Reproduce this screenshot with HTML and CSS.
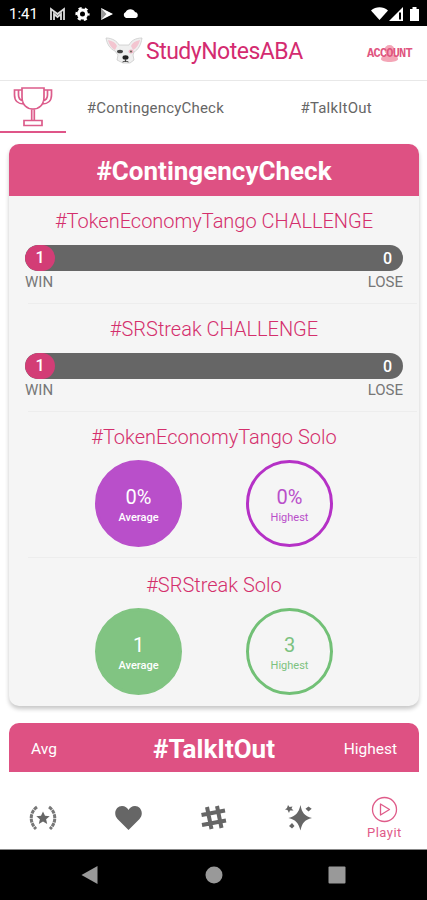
FILE: index.html
```html
<!DOCTYPE html>
<html lang="en">
<head>
    <meta charset="UTF-8">
    <meta name="viewport" content="width=device-width, initial-scale=1.0">
    <title>StudyNotesABA</title>
    <link rel="stylesheet" href="styles.css">
</head>
<body>
    <div class="status-bar">
        <span class="time">1:41</span>
        <svg class="status-left" width="92" height="16" viewBox="0 0 92 16">
            <path d="M2 14V3l6.500 5L15 3v11M5 14V8l3.500 3L12 8v6" fill="none" stroke="#ddd" stroke-width="1.800"/>
            <circle cx="33.500" cy="8" r="4" fill="none" stroke="#fff" stroke-width="3"/>
            <circle cx="33.500" cy="8" r="6" fill="none" stroke="#fff" stroke-width="2.200" stroke-dasharray="3.140 3.140" stroke-dashoffset="1.570"/>
            <path d="M52 2v12l11.500-6z" fill="#999"/>
            <path d="M52 2l12 6-12 6 5.500-6z" fill="#fff"/>
            <path d="M77 12a3.200 3.200 0 0 1-.3-6 5.200 5.200 0 0 1 9.300 0 3.100 3.100 0 0 1 .8 6z" fill="#fff"/>
        </svg>
        <svg class="status-right" width="50" height="16" viewBox="0 0 50 16">
            <path d="M0 4.500C5 .2 12 .2 17 4.500L8.500 14z" fill="#fff"/>
            <path d="M18 15L32 1v14z" fill="#fff"/>
            <path d="M28 6.500h2v7h-2z" fill="#000"/>
            <path d="M39 3h2.500V1h4v2H48v12h-9z" fill="#fff"/>
        </svg>
    </div>

    <header class="header">
        <div class="brand">
            <svg width="38" height="28" viewBox="0 0 38 28">
                <path d="M1 1c6 0 11 3 13 7h10c2-4 6-7 13-7-1 7-4 12-8 14l-1 3 1 5-4 3h-7l-6-3 1-5-3-4C5 12 2 7 1 1z" fill="#efefef" stroke="#ccc" stroke-width=".8"/>
                <path d="M3 3c5 1 8 3 9 6l-2 4C6 11 4 7 3 3zM35 3c-5 1-8 3-9 6l2 4c4-2 6-6 7-10z" fill="#f3c5d0"/>
                <ellipse cx="15" cy="14.500" rx="3" ry="1.800" fill="#444"/>
                <ellipse cx="26" cy="14.500" rx="2.500" ry="2" fill="#eeb5c5"/>
                <circle cx="26" cy="14.500" r="1" fill="#665"/>
                <ellipse cx="20.500" cy="20.500" rx="3" ry="2.200" fill="#222"/>
                <path d="M20.500 22v3m-3 0l3-1 3 1" fill="none" stroke="#444" stroke-width="1"/>
            </svg>
            <span class="brand-name">StudyNotesABA</span>
        </div>
        <div class="account">
            <svg class="account-user" width="17" height="20" viewBox="0 0 17 20">
                <circle cx="8.500" cy="6" r="5"/>
                <path d="M0 15c0-6 17-6 17 0 0 4-17 4-17 0z"/>
            </svg>
            <span>ACCOUNT</span>
        </div>
    </header>

    <nav class="tabs">
        <div class="tab tab-trophy">
            <svg width="42" height="42" viewBox="0 0 42 42" fill="none" stroke="#dc5c8b" stroke-width="1.700">
                <path d="M10 2h22v9c0 8-5 12-11 12s-11-4-11-12zM10 4H2.500v5c0 6 4 9 9 9M32 4h7.500v5c0 6-4 9-9 9M6.500 4v5c0 3 1 5 4.500 6M35.500 4v5c0 3-1 5-4.500 6M19.700 23v11M22.300 23v11M12 34.500h18v5H12z"/>
            </svg>
        </div>
        <div class="tab tab-check">#ContingencyCheck</div>
        <div class="tab tab-talk">#TalkItOut</div>
    </nav>

    <main class="content">
        <section class="card">
            <div class="card-header"><h1>#ContingencyCheck</h1></div>
            <div class="challenge">
                <h2>#TokenEconomyTango CHALLENGE</h2>
                <div class="bar"><span class="wins">1</span><span class="losses">0</span></div>
                <div class="labels"><span>WIN</span><span>LOSE</span></div>
            </div>
            <div class="challenge">
                <h2>#SRStreak CHALLENGE</h2>
                <div class="bar"><span class="wins">1</span><span class="losses">0</span></div>
                <div class="labels"><span>WIN</span><span>LOSE</span></div>
            </div>
            <div class="solo purple">
                <h2>#TokenEconomyTango Solo</h2>
                <div class="circles">
                    <div class="circle filled"><b>0%</b><small>Average</small></div>
                    <div class="circle"><b>0%</b><small>Highest</small></div>
                </div>
            </div>
            <div class="solo green">
                <h2>#SRStreak Solo</h2>
                <div class="circles">
                    <div class="circle filled"><b>1</b><small>Average</small></div>
                    <div class="circle"><b>3</b><small>Highest</small></div>
                </div>
            </div>
        </section>

        <section class="talk-header">
            <span class="avg">Avg</span>
            <h1>#TalkItOut</h1>
            <span class="highest">Highest</span>
        </section>
    </main>

    <nav class="bottom-nav">
        <div class="nav-item">
            <svg width="28" height="28" viewBox="0 0 28 28" fill="#666">
                <path d="M14 7.500l2 4.300 4.700.4-3.600 3.100 1.100 4.600-4.200-2.400-4.200 2.400 1.100-4.600-3.600-3.100 4.700-.4z"/>
                <path d="M8 3C1 8 0 18 7 25M20 3c7 5 8 15 1 22" fill="none" stroke="#777" stroke-width="3" stroke-dasharray="3.800 .7"/>
            </svg>
        </div>
        <div class="nav-item">
            <svg width="28" height="28" viewBox="0 0 28 28" fill="#666">
                <path d="M14.500 26l-11-11C-1.500 9 2.500 2 8 2c3 0 5.500 2 6.500 4 1-2 3.500-4 6.500-4 5.500 0 9.500 7 4.500 13z"/>
            </svg>
        </div>
        <div class="nav-item">
            <svg width="28" height="28" viewBox="0 0 28 28" fill="none" stroke="#666" stroke-width="4">
                <path d="M8 3l4.500 22M18 2l4.500 22M2.500 11L26 6.500M3 21l24-4.500"/>
            </svg>
        </div>
        <div class="nav-item">
            <svg width="28" height="28" viewBox="0 0 28 28" fill="#666">
                <path d="M16.500 1c1.500 8 4 11 11.500 13-7.500 2-10 5-11.500 12.500C14.500 19 12 16 4.500 14c7.500-2 10-5 12-13z"/>
                <path d="M4 1l1.500 2L8.500 2.500 7.500 4.500 9.500 6.500 6 6.500 5 9 3.500 6 1 5.500l2-1.500zM24.500 2.500l3.200 2.300-3.200 2.700-3-2.700zM8 19l2.500 3L8 24.500l-3-2.500z"/>
            </svg>
        </div>
        <div class="nav-item playit">
            <svg width="27" height="27" viewBox="0 0 27 27" fill="none" stroke="#df5b89" stroke-width="1.300">
                <circle cx="13.500" cy="13.500" r="12"/>
                <path d="M9.500 8v11l9-5.500z" stroke-linejoin="round"/>
            </svg>
            <span>Playit</span>
        </div>
    </nav>

    <div class="android-nav">
        <svg width="18" height="20" viewBox="0 0 18 20"><path d="M16.500 1v18L.5 10z"/></svg>
        <svg width="18" height="20" viewBox="0 0 18 20"><circle cx="9" cy="10" r="8.500"/></svg>
        <svg width="18" height="20" viewBox="0 0 18 20"><rect x=".5" y="1.500" width="17" height="17" rx="1"/></svg>
    </div>
</body>
</html>
```
FILE: styles.css
```css
* {
    box-sizing: border-box;
}

body {
    font-family: Roboto, sans-serif;
    background-color: #fff;
    color: #666;
    margin: 0;
    width: 427px;
    height: 900px;
    display: flex;
    flex-direction: column;
    overflow: hidden;
}

h1, h2 {
    margin: 0;
}

svg {
    display: block;
    flex-shrink: 0;
}

.status-bar {
    height: 26px;
    flex-shrink: 0;
    background-color: #000;
    color: #fff;
    display: flex;
    align-items: center;
    padding: 2px 7px 0 9px;
}

.time {
    width: 40px;
    font-size: 15px;
}

.status-right {
    margin-left: auto;
    margin-right: -1px;
}

.header {
    height: 55px;
    flex-shrink: 0;
    border-bottom: 1px solid #e8e8e8;
    display: flex;
    align-items: center;
    justify-content: space-between;
    padding: 0 15px 3px 105px;
}

.brand {
    display: flex;
    align-items: center;
    gap: 3px;
}

.brand svg {
    margin-top: -2px;
}

.brand-name {
    font-size: 23px;
    line-height: 28px;
    letter-spacing: -0.5px;
    color: #d42b70;
    padding-top: 1px;
}

.account {
    position: relative;
    width: 45px;
    margin-top: 4px;
    line-height: 18px;
    color: #e0567f;
    display: flex;
    justify-content: center;
}

.account span {
    font-family: "Liberation Mono", monospace;
    font-size: 12px;
    font-weight: bold;
    letter-spacing: -0.8px;
    position: relative;
}

.account-user {
    position: absolute;
    left: 14px;
    top: -1px;
    fill: #f4a6b7;
}

.tabs {
    height: 52px;
    flex-shrink: 0;
    display: flex;
}

.tab {
    display: flex;
    align-items: center;
    justify-content: center;
    font-size: 15px;
    letter-spacing: 0.2px;
    padding-top: 2px;
}

.tab-trophy {
    width: 66px;
    border-bottom: 2px solid #df5588;
    padding-top: 1px;
}

.tab-check {
    width: 181px;
}

.tab-talk {
    width: 183px;
}

.content {
    flex: 1;
    padding: 11px 8px 0 9px;
}

.card {
    height: 562px;
    background-color: #f5f5f5;
    border-radius: 10px;
    box-shadow: 0 3px 4px rgba(0, 0, 0, 0.22);
    overflow: hidden;
}

.card-header {
    height: 52px;
    background-color: #de5183;
    display: flex;
    align-items: center;
    justify-content: center;
    padding-top: 2px;
}

h1 {
    font-size: 26px;
    font-weight: bold;
    color: #fff;
}

h2 {
    font-size: 20px;
    font-weight: 300;
    line-height: 24px;
    color: #d42f6c;
    text-align: center;
}

.challenge {
    height: 108px;
    padding: 13px 16px 0;
    position: relative;
}

.challenge::after,
.purple::after {
    content: "";
    position: absolute;
    bottom: 0;
    left: 19px;
    right: 2px;
    height: 1px;
    background-color: #ededed;
}

.bar {
    height: 26px;
    margin-top: 12px;
    border-radius: 13px;
    background-color: #666;
    color: #fff;
    font-size: 16px;
    font-weight: 500;
    display: flex;
    align-items: center;
    justify-content: space-between;
    overflow: hidden;
}

.wins {
    width: 30px;
    line-height: 26px;
    border-radius: 13px;
    background-color: #d33d76;
    text-align: center;
}

.losses {
    margin-right: 11px;
}

.labels {
    display: flex;
    justify-content: space-between;
    font-size: 15px;
    line-height: 18px;
    margin-top: 2px;
    color: #777;
}

.solo {
    height: 146px;
    padding-top: 13px;
    position: relative;
}

.green {
    padding-top: 15px;
}

.circles {
    display: flex;
    gap: 64px;
    padding-left: 86px;
    margin-top: 11px;
}

.circle {
    width: 87px;
    height: 87px;
    border: 3px solid;
    border-radius: 50%;
    display: flex;
    flex-direction: column;
    align-items: center;
    padding-top: 22px;
}

.circle b {
    font-size: 20px;
    font-weight: normal;
    line-height: 24px;
}

.circle small {
    font-size: 11px;
    line-height: 14px;
    margin-top: 2px;
}

.purple .circle {
    color: #b94fca;
    border-color: #b531c6;
}

.purple .filled {
    background-color: #b94fca;
    border-color: #b94fca;
    color: #fff;
}

.green .circle {
    color: #7cc27f;
    border-color: #72c076;
}

.green .filled {
    background-color: #81c482;
    border-color: #81c482;
    color: #fff;
}

.filled small {
    font-weight: 500;
}

.talk-header {
    height: 49px;
    margin-top: 17px;
    border-radius: 10px 10px 0 0;
    background-color: #de5183;
    color: #fff;
    display: flex;
    align-items: center;
    justify-content: space-between;
    padding: 3px 22px 0;
    font-size: 15.5px;
}

.avg,
.highest {
    width: 60px;
}

.highest {
    text-align: right;
}

.bottom-nav {
    height: 62px;
    flex-shrink: 0;
    display: flex;
}

.nav-item {
    flex: 1;
    display: flex;
    flex-direction: column;
    align-items: center;
    justify-content: center;
}

.playit {
    color: #df5b89;
    font-size: 13px;
    letter-spacing: 0.5px;
    line-height: 16px;
    gap: 2px;
    padding: 0 0 0 1px;
}

.android-nav {
    height: 51px;
    flex-shrink: 0;
    background-color: #000;
    border-top: 1px solid #888;
    display: flex;
    align-items: center;
    justify-content: space-between;
    padding: 0 81px;
    fill: #999;
}
```
